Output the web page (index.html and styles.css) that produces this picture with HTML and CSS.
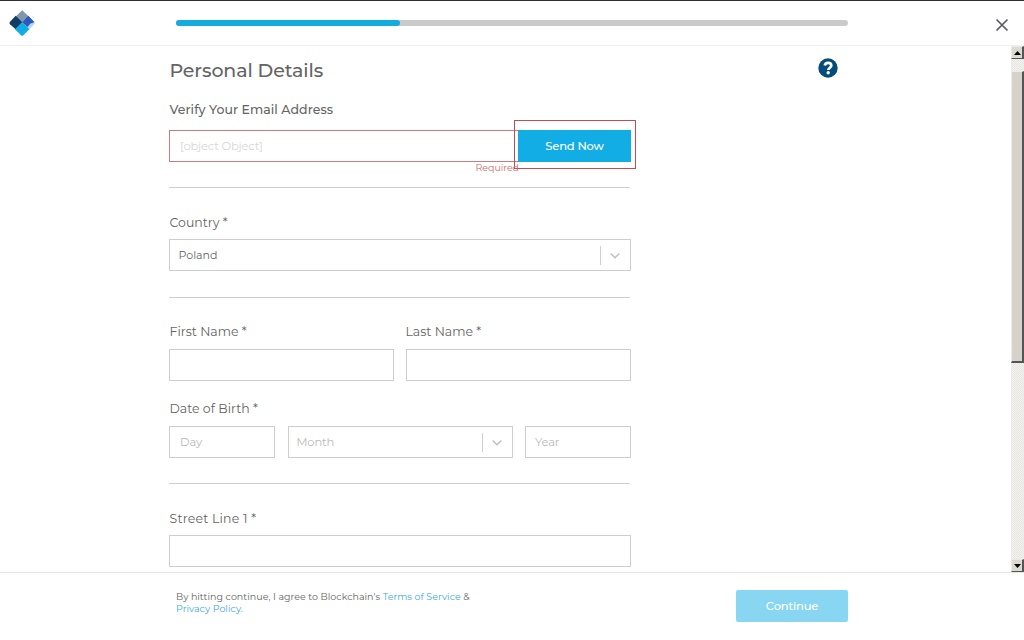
FILE: index.html
```html
<!DOCTYPE html>
<html lang="en">
<head>
<meta charset="utf-8">
<title>Personal Details</title>
<link rel="stylesheet" href="styles.css">
</head>
<body>
<header class="header">
  <svg class="logo" width="28" height="28" viewBox="0 0 28 28">
    <path d="M14.2 1.2 20.6 7.3 14.2 14 7.7 7.5z" fill="#8096ac"/>
    <path d="M7.7 6.8 14.5 13.6 7.9 20.5 2 15.2Q.8 14 2 12.7z" fill="#123b68"/>
    <path d="M21 14h6.3L20.8 21l-3.5-3.3z" fill="#b8d8ed"/>
    <path d="M20.3 6.8 26.7 13.2 22.5 14.5 19.5 18 14.2 13.4z" fill="#2b59bd"/>
    <path d="M14.2 13 21.4 20.3 15.4 26.2Q14.2 27.3 13 26.2L7 20.3z" fill="#10ade4"/>
  </svg>
  <div class="progress"><div class="progress-fill"></div></div>
  <svg class="close" width="14" height="14" viewBox="0 0 14 14"><path d="M1.5 1.5 12.5 12.5M12.5 1.5 1.5 12.5"/></svg>
</header>
<main class="main">
  <form class="form">
    <h1 class="title">Personal Details</h1>
    <label class="label label-strong">Verify Your Email Address</label>
    <div class="email-row">
      <div class="input input-error"><span class="placeholder faint">[object Object]</span></div>
      <div class="button-wrap"><button class="button" type="button">Send Now</button></div>
      <span class="error">Required</span>
    </div>
    <hr class="rule">
    <label class="label country">Country *</label>
    <div class="input select"><span class="value">Poland</span>
      <svg class="chevron" width="30" height="30" viewBox="0 0 30 30"><path class="separator" d="M.5 6v19"/><path d="m10.7 13.5 4.3 4.3 4.3-4.3"/></svg>
    </div>
    <hr class="rule rule-country">
    <div class="names">
      <label class="label first">First Name *</label><label class="label last">Last Name *</label>
      <div class="input"></div><div class="input"></div>
    </div>
    <label class="label birth">Date of Birth *</label>
    <div class="dates">
      <div class="input"><span class="placeholder">Day</span></div>
      <div class="input select"><span class="placeholder month">Month</span>
        <svg class="chevron" width="30" height="30" viewBox="0 0 30 30"><path class="separator" d="M.5 6v19"/><path d="m10.7 13.5 4.3 4.3 4.3-4.3"/></svg>
      </div>
      <div class="input"><span class="placeholder year">Year</span></div>
    </div>
    <hr class="rule">
    <label class="label street">Street Line 1 *</label>
    <div class="input"></div>
  </form>
  <svg class="help" width="20" height="20" viewBox="0 0 20 20">
    <circle cx="10" cy="10" r="9.7" fill="#034c7c"/>
    <path d="M6.7 7.6C7.1 5.6 8.3 4.8 10 4.8c2 0 3.3 1.1 3.3 2.7 0 2.2-3 2.3-3 4.6" fill="none" stroke="#fff" stroke-width="2.7"/>
    <circle cx="10.2" cy="14.8" r="1.7" fill="#fff"/>
  </svg>
  <div class="scrollbar">
    <div class="scroll-button"><svg width="7" height="4" viewBox="0 0 7 4"><path d="M0 4 3.5 0 7 4z"/></svg></div>
    <div class="thumb"></div>
    <div class="scroll-button end"><svg width="7" height="4" viewBox="0 0 7 4"><path d="M0 0h7L3.5 4z"/></svg></div>
  </div>
</main>
<footer class="footer">
  <p class="terms"><span class="line agree">By hitting continue, I agree to Blockchain's <a>Terms of Service</a> &amp;</span><span class="line policy"><a>Privacy Policy.</a></span></p>
  <button class="button continue" type="button">Continue</button>
</footer>
</body>
</html>
```
FILE: styles.css
```css
* { box-sizing: border-box; }
body { margin: 0; width: 1024px; height: 640px; overflow: hidden; display: flex; flex-direction: column; background: #fff; color: #646464; font-family: Montserrat, Inter, sans-serif; font-size: 12px; }
.header { flex: none; display: flex; align-items: flex-start; height: 46px; border-top: 1px solid #302d33; border-bottom: 1px solid #f0f0f0; }
.logo { margin: 8px 0 0 8px; }
.progress { width: 672px; height: 6px; margin: 19px 0 0 140px; border-radius: 3px; background: #cacaca; }
.progress-fill { width: 224px; height: 6px; border-radius: 3px; background: #14abe1; }
.close { margin: 17px 0 0 147px; fill: none; stroke: #5a5d62; stroke-width: 1.7; }
.main { flex: none; height: 526px; display: flex; overflow: hidden; }
.form { display: flex; flex-direction: column; width: 462px; margin-left: 169px; padding-top: 13px; }
.title { margin: 0 0 17px; padding-left: .5px; font-size: 19px; line-height: 24px; font-weight: 500; letter-spacing: -.12px; }
.label { display: block; height: 20px; line-height: 22px; padding-left: .5px; font-size: 12.5px; white-space: nowrap; }
.label-strong { line-height: 20px; font-weight: 500; letter-spacing: .06px; margin-bottom: 10px; }
.email-row { position: relative; display: flex; height: 32px; }
.email-row .input { flex: 1; }
.input { display: flex; align-items: center; height: 32px; border: 1px solid #cecece; background: #fff; }
.input-error { border-color: #c87b80; border-right: 0; }
.placeholder { padding-left: 10px; font-size: 11.5px; color: #b9b9b9; }
.placeholder.month { padding-left: 8px; letter-spacing: -.15px; }
.placeholder.year { padding-left: 9px; letter-spacing: -.1px; }
.placeholder.faint { color: #d6d6d6; font-weight: 400; letter-spacing: -.18px; }
.value { padding-left: 8.5px; font-size: 11px; }
.button { display: block; width: 112px; height: 32px; padding: 0 0 1px; border: 0; background: #12ade5; color: #fff; font: 500 11.5px Montserrat, Inter, sans-serif; letter-spacing: -.18px; }
.button-wrap { position: relative; width: 113px; }
.button-wrap .button { width: 113px; }
.button-wrap::after { content: ""; position: absolute; box-sizing: border-box; left: -4px; top: -10px; width: 122px; height: 49px; border: 1px solid #c54a50; }
.error { position: absolute; right: 112px; top: 32px; line-height: 12px; font-size: 9.5px; letter-spacing: -.05px; color: #c76d72; }
.rule { width: 461px; height: 1px; margin: 25px 0; border: 0; background: #cecece; }
.country { margin: -1px 0 7px; }
.rule-country { margin: 26px 0 23px; }
.names { display: grid; grid-template-columns: 225px 225px; column-gap: 12px; row-gap: 8px; }
.last { margin-left: -1px; }
.birth { margin: 17px 0 8px; }
.dates { display: grid; grid-template-columns: 106px 225px 106px; column-gap: 12px; justify-content: space-between; }
.street { margin: -1px 0 7px; letter-spacing: .2px; }
.select { justify-content: space-between; }
.chevron { fill: none; stroke: #bfbfbf; stroke-width: 1.5; }
.separator { stroke: #cecece; stroke-width: 1; }
.help { margin: 12px 0 0 187px; }
.scrollbar { display: flex; flex-direction: column; width: 13px; height: 526px; margin-left: 173px; background: repeating-conic-gradient(#e8e6e2 0 25%, #f3f2ef 0 50%) 0 0 / 2px 2px; }
.scroll-button { display: flex; align-items: center; justify-content: center; height: 13px; background: #dbd9d2; border: 1px solid #ece9e3; border-right: 2px solid #555; border-bottom: 1px solid #555; }
.thumb { height: 292px; margin-top: 12px; background: #d6d2ca; border-left: 1px solid #eeece7; border-top: 1px solid #eeece7; border-right: 2px solid #555; border-bottom: 2px solid #555; }
.end { margin-top: auto; }
.footer { height: 68px; display: flex; align-items: flex-start; border-top: 1px solid #e6e6e6; }
.terms { width: 300px; margin: 18px 0 0 176px; font-size: 9.5px; line-height: 12px; letter-spacing: .03px; }
.line { display: block; white-space: nowrap; }
.terms a { color: #3caadb; }
.continue { margin: 17px 0 0 260px; padding: 0; border-radius: 2px; background: #88d6f2; }
```
